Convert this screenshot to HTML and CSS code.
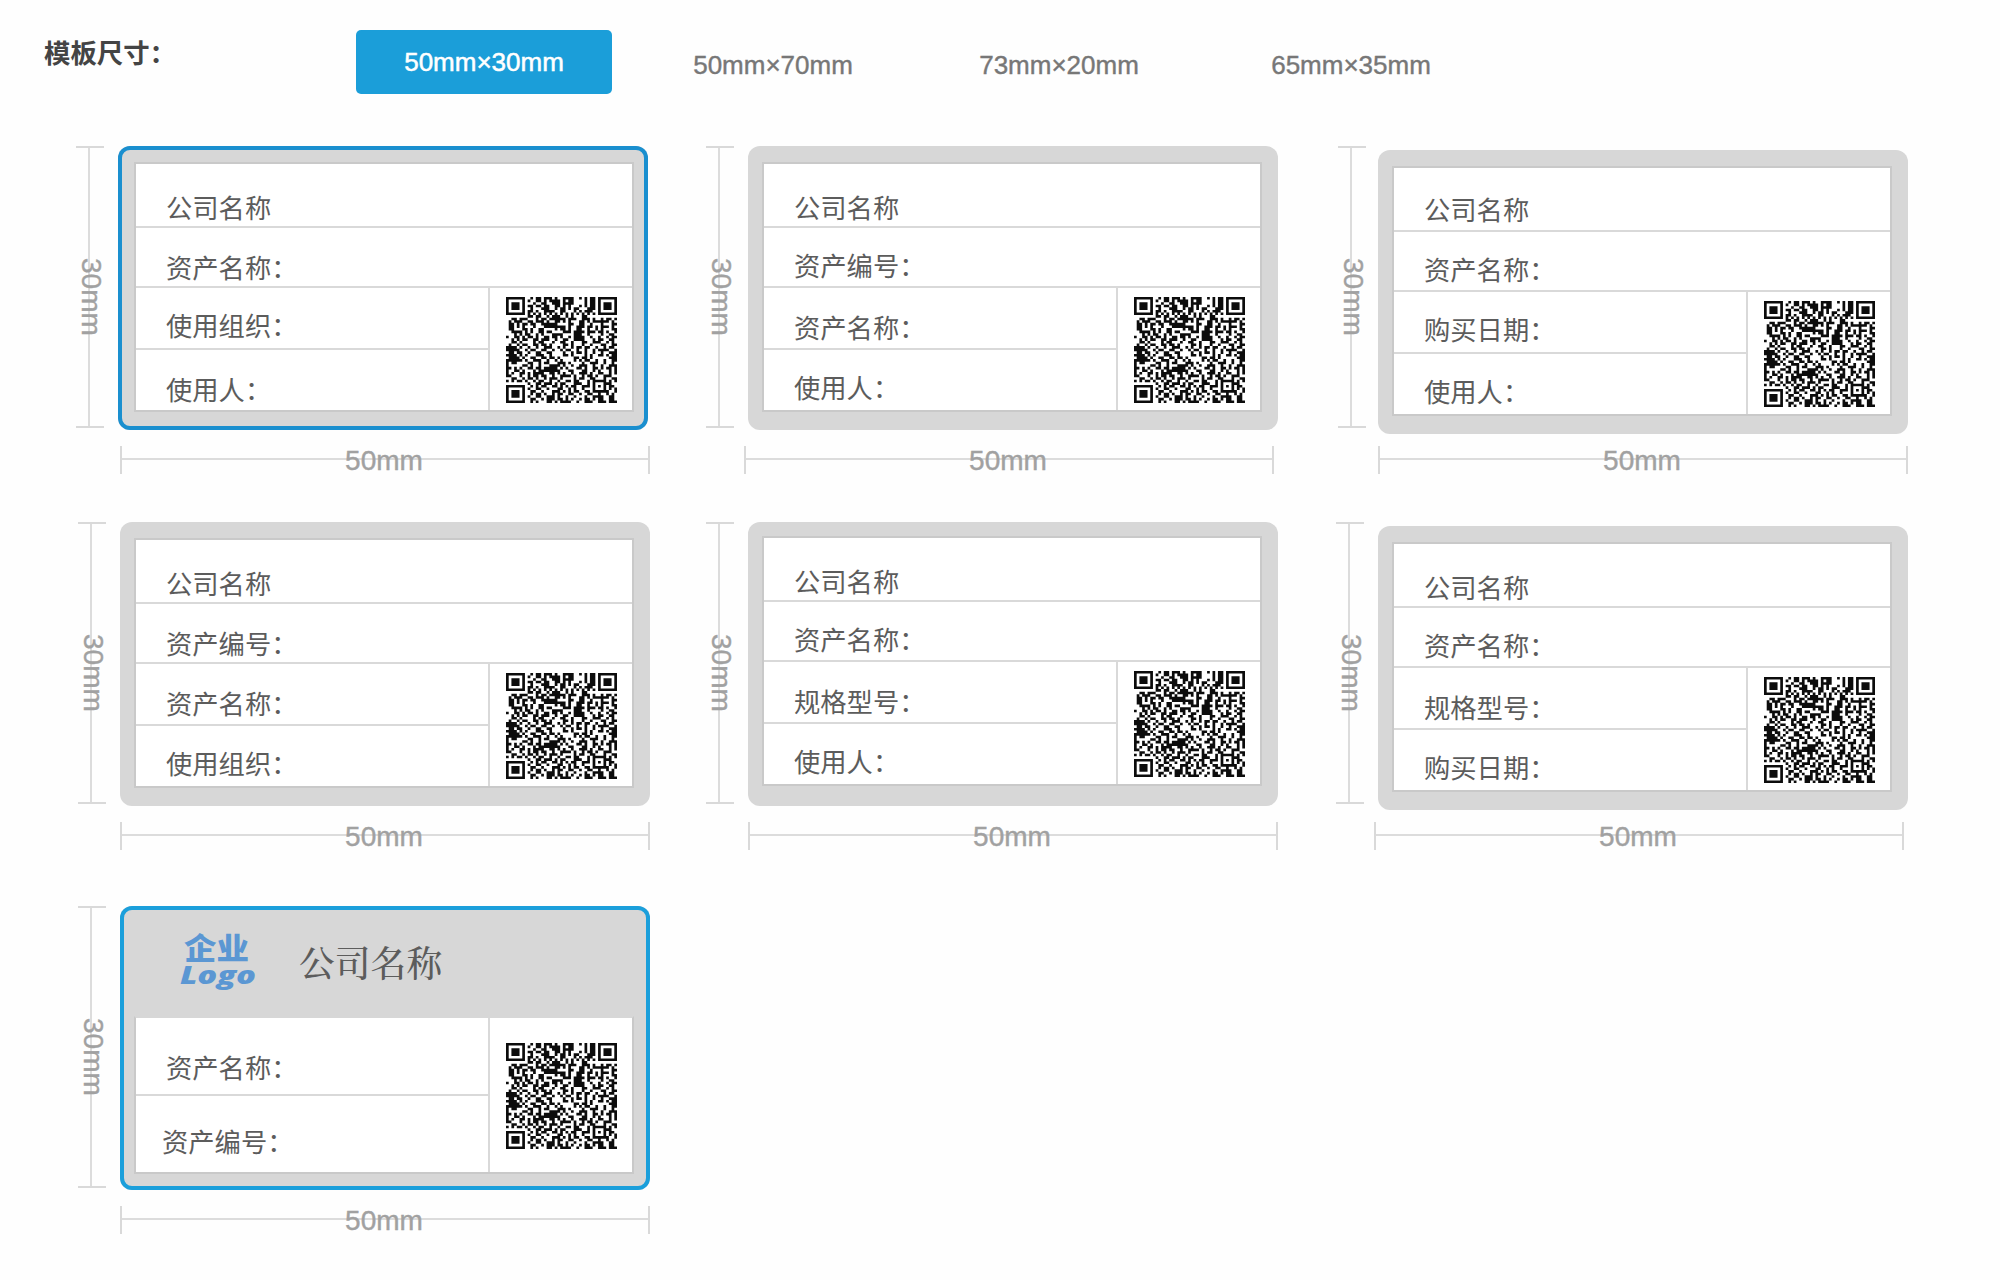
FILE: index.html
```html
<!DOCTYPE html>
<html lang="zh-CN">
<head>
<meta charset="utf-8">
<title>模板尺寸</title>
<link rel="stylesheet" href="styles.css">
</head>
<body>
<svg class="defs" aria-hidden="true"><symbol id="qr" viewBox="0 0 41 41" preserveAspectRatio="none"><path id="qr-path" d=""/></symbol></svg>
<header class="sizes">
  <h1 class="sizes-title">模板尺寸：</h1>
  <button class="size active">50mm×30mm</button>
  <button class="size">50mm×70mm</button>
  <button class="size">73mm×20mm</button>
  <button class="size">65mm×35mm</button>
</header>
<main class="templates">
  <section class="template t1">
    <div class="vdim"><span>30mm</span></div>
    <div class="card selected"><div class="label">
      <p class="row">公司名称</p><p class="row">资产名称：</p><p class="row half">使用组织：</p><p class="row half">使用人：</p>
      <div class="code"><svg><use href="#qr"/></svg></div></div></div>
    <div class="hdim"><span>50mm</span></div>
  </section>
  <section class="template t2">
    <div class="vdim"><span>30mm</span></div>
    <div class="card"><div class="label">
      <p class="row">公司名称</p><p class="row">资产编号：</p><p class="row half">资产名称：</p><p class="row half">使用人：</p>
      <div class="code"><svg><use href="#qr"/></svg></div></div></div>
    <div class="hdim"><span>50mm</span></div>
  </section>
  <section class="template t3">
    <div class="vdim"><span>30mm</span></div>
    <div class="card"><div class="label">
      <p class="row">公司名称</p><p class="row">资产名称：</p><p class="row half">购买日期：</p><p class="row half">使用人：</p>
      <div class="code"><svg><use href="#qr"/></svg></div></div></div>
    <div class="hdim"><span>50mm</span></div>
  </section>
  <section class="template t4">
    <div class="vdim"><span>30mm</span></div>
    <div class="card"><div class="label">
      <p class="row">公司名称</p><p class="row">资产编号：</p><p class="row half">资产名称：</p><p class="row half">使用组织：</p>
      <div class="code"><svg><use href="#qr"/></svg></div></div></div>
    <div class="hdim"><span>50mm</span></div>
  </section>
  <section class="template t5">
    <div class="vdim"><span>30mm</span></div>
    <div class="card"><div class="label">
      <p class="row">公司名称</p><p class="row">资产名称：</p><p class="row half">规格型号：</p><p class="row half">使用人：</p>
      <div class="code"><svg><use href="#qr"/></svg></div></div></div>
    <div class="hdim"><span>50mm</span></div>
  </section>
  <section class="template t6">
    <div class="vdim"><span>30mm</span></div>
    <div class="card"><div class="label">
      <p class="row">公司名称</p><p class="row">资产名称：</p><p class="row half">规格型号：</p><p class="row half">购买日期：</p>
      <div class="code"><svg><use href="#qr"/></svg></div></div></div>
    <div class="hdim"><span>50mm</span></div>
  </section>
  <section class="template t7">
    <div class="vdim"><span>30mm</span></div>
    <div class="card selected bright">
      <div class="brand">
        <svg class="logo" viewBox="0 0 80 72">
          <text class="logo-cn" x="4" y="30" textLength="65" lengthAdjust="spacingAndGlyphs">企业</text>
          <text class="logo-en" x="0" y="55" textLength="76" lengthAdjust="spacingAndGlyphs">Logo</text>
        </svg>
        <h2 class="company">公司名称</h2>
      </div>
      <div class="label short">
        <p class="row half">资产名称：</p><p class="row half">资产编号：</p>
        <div class="code"><svg><use href="#qr"/></svg></div>
      </div>
    </div>
    <div class="hdim"><span>50mm</span></div>
  </section>
</main>
<script src="qr.js"></script>
</body>
</html>
```
FILE: styles.css
```css
* { box-sizing: border-box; }
body {
  margin: 0;
  width: 2000px;
  height: 1280px;
  overflow: hidden;
  background: #fefefe;
  font-family: "Liberation Sans", "Noto Sans CJK SC", sans-serif;
}
.defs { display: block; width: 0; height: 0; }

/* size tabs */
.sizes { display: flex; align-items: flex-start; height: 146px; padding: 30px 0 0 44px; }
.sizes-title {
  width: 312px;
  margin: 7px 0 0;
  font: bold 26.4px/30px "Noto Sans CJK SC", sans-serif;
  color: #444;
}
.size {
  height: 64px;
  margin: 3px 0 0;
  padding: 0;
  border: 0;
  border-radius: 5px;
  background: none;
  color: #777;
  font: 26px/62px "Liberation Sans", sans-serif;
  -webkit-text-stroke: .4px;
  width: 160px;
  text-align: center;
}
.size.active { width: 256px; height: 64px; margin: 0 81px 0 0; background: #1b9ed9; color: #fff; line-height: 60px; -webkit-text-stroke: .5px #fff; }
.size:nth-of-type(2) { margin-right: 126px; }
.size:nth-of-type(3) { margin-right: 132px; }

/* template grid */
.templates {
  display: grid;
  grid-template-columns: repeat(3, 630px);
  grid-template-rows: 376px 384px 330px;
  padding-left: 76px;
}
.template {
  --vx: 0px; --hx: 44px; --cx: 42px; --cy: 0px; --lx: 14px; --ly: 16px;
  display: grid;
  grid-template-columns: 0 1fr;
  grid-template-rows: 300px 28px;
  align-content: start;
}
.vdim {
  width: 28px;
  height: 282px;
  margin-left: var(--vx);
  display: flex;
  align-items: center;
  justify-content: center;
  border: solid #d9d9d9;
  border-width: 2px 0;
  background: linear-gradient(#dcdcdc, #dcdcdc) 12px 0 / 2px 100% no-repeat;
}
.vdim span {
  writing-mode: vertical-rl;
  font-size: 28px;
  line-height: 28px;
  color: #a1a1a1;
  -webkit-text-stroke: .4px;
  margin: 20px 0 0 2px;
}
.hdim {
  grid-column: 2;
  width: 530px;
  height: 28px;
  margin-left: var(--hx);
  padding-right: 2px;
  border: solid #d9d9d9;
  border-width: 0 2px;
  background: linear-gradient(#dcdcdc, #dcdcdc) center 12px / 100% 2px no-repeat;
  text-align: center;
  font-size: 28px;
  line-height: 30px;
  color: #a1a1a1;
  -webkit-text-stroke: .4px;
}
.card {
  width: 530px;
  height: 284px;
  margin: var(--cy) 0 0 var(--cx);
  padding: var(--ly) 0 0 var(--lx);
  border-radius: 12px;
  background: #d7d7d7;
}
.card.selected { box-shadow: inset 0 0 0 4px #1a8fcf; }
.card.bright { box-shadow: inset 0 0 0 4px #1b9fdb; }

/* printed label */
.label {
  display: grid;
  grid-template-columns: 352px 144px;
  grid-template-rows: 64px 60px 62px 60px;
  width: 500px;
  height: 250px;
  border: 2px solid #c9c9c9;
  background: #fff;
}
.row {
  grid-column: 1 / 3;
  margin: 0;
  padding: 25px 0 0 30px;
  border-bottom: 2px solid #d9d9d9;
  font: 26.3px/28px "Noto Sans CJK SC", sans-serif;
  color: #5c5c5c;
}
.row.half { grid-column: 1; }
.row:nth-child(4) { border-bottom: 0; }
.code {
  grid-column: 2;
  grid-row: 3 / 5;
  border-left: 2px solid #d9d9d9;
  padding: 9px 0 0 16px;
}
.code svg { display: block; width: 111px; height: 106px; fill: #0c0c0c; }

.row:nth-child(1) { padding-top: 29px; }
.t1 { --lx: 16px; }
.t1 .row:nth-child(3) { padding-top: 23px; }
.t2 { --hx: 38px; }
.t2 .row:nth-child(2) { padding-top: 23px; }
.t2 .row:nth-child(4) { padding-top: 23px; }
.t3 { --vx: 2px; --hx: 42px; --cy: 4px; }
.t3 .row { padding-top: 23px; }
.t3 .row:nth-child(1) { padding-top: 27px; }
.t4 { --vx: 2px; --cx: 44px; }
.t4 .row:nth-child(4) { padding-top: 23px; }
.t5 { --hx: 42px; --ly: 14px; }
.t5 .row:nth-child(2), .t5 .row:nth-child(4) { padding-top: 23px; }
.t6 { --hx: 38px; --cy: 4px; }
.t6 .row:nth-child(2), .t6 .row:nth-child(4) { padding-top: 23px; }

/* label with logo */
.t7 { --vx: 2px; --cx: 44px; --ly: 0px; }
.brand { display: flex; height: 110px; padding: 23px 0 0 46px; }
.logo { width: 80px; height: 72px; fill: #5b97d3; overflow: visible; }
.logo-cn { font: 900 30px "Noto Sans CJK SC", sans-serif; }
.logo-en { font: italic 800 25px "Open Sans", sans-serif; }
.company {
  margin: 15px 0 0 39px;
  font: 500 35.8px/36px "Noto Serif CJK SC", "Noto Sans CJK SC", serif;
  color: #5c5c5c;
}
.label.short { grid-template-rows: 78px 76px; height: 158px; border-top-color: #d7d7d7; }
.short .row:nth-child(1) { padding-top: 35px; }
.short .row:nth-child(2) { padding: 31px 0 0 26px; border-bottom: 0; }
.short .code { grid-row: 1 / 3; padding-top: 25px; }
```
FILE: qr.js
```js
// Rows of the sample QR code, one character per module.
const rows = [
  '#######..#.##.###.#..####..#.#.##.#######',
  '#.....#.#..##.#.####.#.##....#.##.#.....#',
  '#.###.#...#..##..###.####....#.##.#.###.#',
  '#.###.#.##.##.##..##.#.#...#.#.##.#.###.#',
  '#.###.#..#...###..#.##.#.##...###.#.###.#',
  '#.....#.##.#..####..##...#.#.###..#.....#',
  '#######.#.#.#.#.#.#.#.#.#.#.#.#.#.#######',
  '........##.##..#.###..#.#...##...........',
  '..##.###...#.##.######.###..###.#..#.##.#',
  '.#.###..##.###.#..##.#.#...##.#.######.#.',
  '.##.#.##.##..######....##..##..#...#...##',
  '.##.#.#...#...########.#..###.##.#.###.#.',
  '.##...##.#..##....#.##.#..##..#..#.#...##',
  '..####.#.#..##.##....###.####.###.##.#..#',
  '...#.#.##..#.#...####....###..#....#..##.',
  '#..##.#.##.#..##.##.#..#.####..#..#..#.##',
  '..#.#.##..##.###..#..##..####...#.##..##.',
  '..##.#....#.##...#..##..#...##..###..#.#.',
  '.#..#.##..##.##.#....##.#...#..#...##..##',
  '####.#..#..#..###..#.#..#.##.##..#..#.##.',
  '#####..#.##..##..#..#.##..#..#..#.####..#',
  '.##.##..#..##..##....#..#.##.#..#..#..###',
  '####.#.#...###..#....##.#....#.#..##.#.##',
  '.####.#..##..##.##.#.....##.##.#......###',
  '######.#..###..#..#.#....#.#.##..#..#..##',
  '#.##....##..#.##...###.#....#..###..#..#.',
  '#.....##.#..#...####.#..#..###..#..#..###',
  '##.#.#..##.##.#####.#.#...##.#..##.#.##.#',
  '#..##.#...#.########...##...##..#.#...#.#',
  '#.#..##.#.####..##.#.#..#..###.#..##..#.#',
  '##...#..#.##.##..#..####.#..#.##.#..###..',
  '..##..#.##.#..#.###.#....#.##..##...#..##',
  '#.#.##.#..#.##..#..#..##.##...#.#####.#.#',
  '........#..##.###.#.##...###..#.#...###..',
  '#######..#.#.##..##.#.#.##..###.#.#.#.##.',
  '#.....#.#..##..#...##..#.#..#...#...#.#.#',
  '#.###.#..##..#...###.#.#.##..##.######..#',
  '#.###.#..#.##.#..#.##..##..#..##..#..#.#.',
  '#.###.#.#..##..###.#..#..#...#..####..##.',
  '#.....#..##..#.###.##.#.#..#.##.#.##..##.',
  '#######..#.#...##.#.####..#..###..###.###'
];

// Each horizontal run of dark modules becomes one rectangle of the path.
let d = '';
rows.forEach((row, y) => {
  for (const run of row.matchAll(/#+/g)) {
    d += `M${run.index} ${y}h${run[0].length}v1h-${run[0].length}z`;
  }
});
document.getElementById('qr-path').setAttribute('d', d);
```
